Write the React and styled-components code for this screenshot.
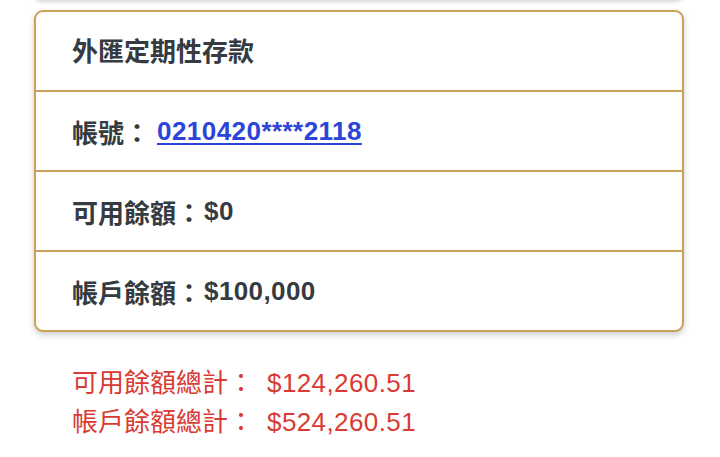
import React from "react";
import styled, { createGlobalStyle } from "styled-components";

const GlobalStyle = createGlobalStyle`
  body {
    margin: 0;
    background: #ffffff;
    font-family: "Liberation Sans", "Noto Sans CJK TC", sans-serif;
  }
`;

const Page = styled.div`
  padding: 0 36px 0 34px;
  overflow: hidden;
  height: 457px;
  box-sizing: border-box;
`;

const PrevCard = styled.div`
  height: 40px;
  margin-top: -41px;
  background: #fff;
  border-radius: 8px;
  box-shadow: 0 2px 5px rgba(0, 0, 0, 0.22);
`;

const Card = styled.div`
  margin-top: 11px;
  background: #fff;
  border: 2px solid #c9a257;
  border-radius: 9px;
  box-shadow: 0 3px 6px rgba(0, 0, 0, 0.2);
  overflow: hidden;
`;

const Row = styled.div`
  height: ${(p) => (p.$title ? "74px" : "78px")};
  display: flex;
  align-items: center;
  padding-left: 36px;
  padding-bottom: ${(p) => (p.$title ? "4px" : "0")};
  font-size: 26px;
  font-weight: bold;
  color: #353b41;
  border-bottom: ${(p) => (p.$last ? "none" : "2px solid #c9a257")};
`;

const Amount = styled.span`
  letter-spacing: 0.4px;
  margin-left: ${(p) => p.$gap || "2px"};
`;

const AccountLink = styled.a`
  color: #2c45d8;
  text-decoration: underline;
  text-underline-offset: 3px;
  letter-spacing: 0.45px;
  margin-left: 7px;
`;

const Totals = styled.div`
  padding: 32px 0 0 38px;
  color: #d93a32;
  font-size: 26px;
  line-height: 39px;
`;

const TotalLine = styled.div`
  white-space: nowrap;
`;

export default function App() {
  return (
    <Page>
      <GlobalStyle />
      <PrevCard />
      <Card>
        <Row $title>外匯定期性存款</Row>
        <Row>
          帳號：
          <AccountLink href="#">0210420****2118</AccountLink>
        </Row>
        <Row>
          可用餘額：<Amount>$0</Amount>
        </Row>
        <Row $last>
          帳戶餘額：<Amount>$100,000</Amount>
        </Row>
      </Card>
      <Totals>
        <TotalLine>
          可用餘額總計：<Amount $gap="13px">$124,260.51</Amount>
        </TotalLine>
        <TotalLine>
          帳戶餘額總計：<Amount $gap="13px">$524,260.51</Amount>
        </TotalLine>
      </Totals>
    </Page>
  );
}
